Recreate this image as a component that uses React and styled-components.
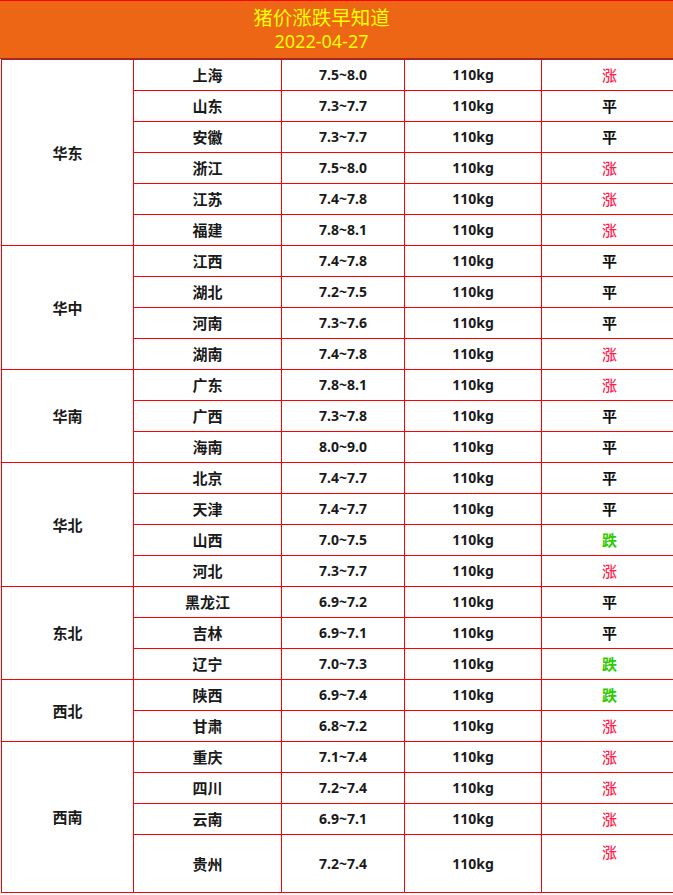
import React from 'react'
import styled, { createGlobalStyle } from 'styled-components'

const GlobalStyle = createGlobalStyle`
  html, body {
    margin: 0;
    padding: 0;
    background: #fff;
    overflow: hidden;
  }
  body {
    font-family: "Noto Sans", "Noto Sans CJK SC", sans-serif;
  }
`

const regions = [
  { name: '华东', rows: [
    ['上海', '7.5~8.0', '涨'], ['山东', '7.3~7.7', '平'], ['安徽', '7.3~7.7', '平'],
    ['浙江', '7.5~8.0', '涨'], ['江苏', '7.4~7.8', '涨'], ['福建', '7.8~8.1', '涨'],
  ] },
  { name: '华中', rows: [
    ['江西', '7.4~7.8', '平'], ['湖北', '7.2~7.5', '平'], ['河南', '7.3~7.6', '平'], ['湖南', '7.4~7.8', '涨'],
  ] },
  { name: '华南', rows: [
    ['广东', '7.8~8.1', '涨'], ['广西', '7.3~7.8', '平'], ['海南', '8.0~9.0', '平'],
  ] },
  { name: '华北', rows: [
    ['北京', '7.4~7.7', '平'], ['天津', '7.4~7.7', '平'], ['山西', '7.0~7.5', '跌'], ['河北', '7.3~7.7', '涨'],
  ] },
  { name: '东北', rows: [
    ['黑龙江', '6.9~7.2', '平'], ['吉林', '6.9~7.1', '平'], ['辽宁', '7.0~7.3', '跌'],
  ] },
  { name: '西北', rows: [
    ['陕西', '6.9~7.4', '跌'], ['甘肃', '6.8~7.2', '涨'],
  ] },
  { name: '西南', rows: [
    ['重庆', '7.1~7.4', '涨'], ['四川', '7.2~7.4', '涨'], ['云南', '6.9~7.1', '涨'], ['贵州', '7.2~7.4', '涨', true],
  ] },
]

const Page = styled.div`
  width: 673px;
  overflow: hidden;
`

const Header = styled.div`
  height: 59px;
  box-sizing: border-box;
  padding: 4px 30px 0 0;
  background: #ec6616;
  border-top: 1px solid #ff0000;
  border-bottom: 1px solid #4d4d4d;
  color: #ffff00;
  text-align: center;
  font-family: "Noto Sans CJK SC", sans-serif;
`

const Title = styled.div`
  font-size: 19.5px;
  line-height: 23px;
  height: 24px;
`

const DateLine = styled.div`
  font-size: 18px;
  line-height: 24px;
  font-family: "Noto Sans", "Noto Sans CJK SC", sans-serif;
`

const PriceTable = styled.table`
  margin-left: 1px;
  border-collapse: collapse;
  table-layout: fixed;
  width: 676px;
  border: 1px solid #ff0000;
  border-top: none;
`

const Row = styled.tr`
  height: ${p => (p.$tall ? '58px' : '30px')};
`

const Cell = styled.td`
  border: 1px solid #ff0000;
  padding: 0;
  text-align: center;
  vertical-align: middle;
  color: #1a1a1a;
  font-weight: 700;
  font-size: ${p => (p.$cjk ? '15px' : '14px')};
  font-family: ${p => (p.$cjk ? '"Noto Sans CJK SC", sans-serif' : '"Noto Sans", "Noto Sans CJK SC", sans-serif')};
  line-height: 30px;
  white-space: nowrap;
`

const RegionCell = styled(Cell)`
  font-size: 15px;
`

const trendColors = { 涨: '#ff1f4f', 平: '#111', 跌: '#2ecc00' }

const TrendCell = styled(Cell)`
  color: ${p => trendColors[p.$trend]};
  font-weight: ${p => (p.$trend === '涨' ? 500 : 700)};
  vertical-align: ${p => (p.$tall ? 'top' : 'middle')};
  padding-top: ${p => (p.$tall ? '2px' : '0')};
`

export default function App() {
  return (
    <Page>
      <GlobalStyle />
      <Header>
        <Title>猪价涨跌早知道</Title>
        <DateLine>2022-04-27</DateLine>
      </Header>
      <PriceTable>
        <colgroup>
          <col style={{ width: 132 }} />
          <col style={{ width: 148 }} />
          <col style={{ width: 123 }} />
          <col style={{ width: 137 }} />
          <col style={{ width: 136 }} />
        </colgroup>
        <tbody>
          {regions.map(region =>
            region.rows.map(([city, price, trend, tall], i) => (
              <Row key={city} $tall={tall}>
                {i === 0 && (
                  <RegionCell $cjk rowSpan={region.rows.length}>{region.name}</RegionCell>
                )}
                <Cell $cjk>{city}</Cell>
                <Cell>{price}</Cell>
                <Cell>110kg</Cell>
                <TrendCell $cjk $trend={trend} $tall={tall}>{trend}</TrendCell>
              </Row>
            ))
          )}
        </tbody>
      </PriceTable>
    </Page>
  )
}
